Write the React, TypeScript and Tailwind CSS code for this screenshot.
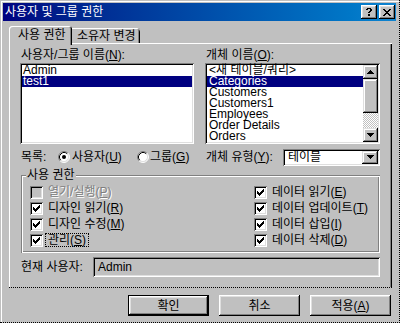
import React from "react";

const FONT = "font-['Liberation_Sans','Noto_Sans_CJK_KR',sans-serif]";

const RAISED =
  "shadow-[inset_-1px_-1px_0_#000,inset_1px_1px_0_#fff,inset_-2px_-2px_0_#808080,inset_2px_2px_0_#dfdfdf]";
const RAISED_SB =
  "shadow-[inset_-1px_-1px_0_#000,inset_1px_1px_0_#dfdfdf,inset_-2px_-2px_0_#808080,inset_2px_2px_0_#fff]";
const SUNKEN =
  "shadow-[inset_1px_1px_0_#808080,inset_-1px_-1px_0_#fff,inset_2px_2px_0_#000,inset_-2px_-2px_0_#dfdfdf]";
const ETCHED =
  "shadow-[inset_1px_1px_0_#808080,inset_-1px_-1px_0_#fff,inset_2px_2px_0_#fff,inset_-2px_-2px_0_#808080]";

const CHECK = ["......#", ".....##", "#...###", "##.###.", "#####..", ".###...", "..#...."];
const CLOSE = ["##....##", ".##..##.", "..####..", "...##...", "..####..", ".##..##.", "##....##"];
const HELP = [".####.", "##..##", "....##", "...##.", "..##..", "......", "..##..", "..##.."];
const UP = ["...#...", "..###..", ".#####.", "#######"];
const DOWN = ["#######", ".#####.", "..###..", "...#..."];

function Pixels({ rows, color = "#000" }: { rows: string[]; color?: string }) {
  const w = rows[0].length;
  const h = rows.length;
  return (
    <svg width={w} height={h} viewBox={`0 0 ${w} ${h}`} shapeRendering="crispEdges">
      {rows.flatMap((row, y) =>
        row
          .split("")
          .map((c, x) =>
            c === "#" ? <rect key={`${x}-${y}`} x={x} y={y} width={1} height={1} fill={color} /> : null
          )
      )}
    </svg>
  );
}

function U({ children }: { children: React.ReactNode }) {
  return <span className="underline underline-offset-1">{children}</span>;
}

function CheckBox({ checked, disabled }: { checked?: boolean; disabled?: boolean }) {
  return (
    <div
      className={`flex h-[13px] w-[13px] shrink-0 items-center justify-center ${SUNKEN} ${
        disabled ? "bg-[#c0c0c0]" : "bg-white"
      }`}
    >
      {checked && <Pixels rows={CHECK} />}
    </div>
  );
}

function Radio({ checked }: { checked?: boolean }) {
  return (
    <svg width="12" height="12" viewBox="0 0 12 12" className="shrink-0">
      <circle cx="6" cy="6" r="5" fill="#fff" />
      <path d="M2.11 9.89A5.5 5.5 0 0 1 9.89 2.11" fill="none" stroke="#808080" />
      <path d="M9.89 2.11A5.5 5.5 0 0 1 2.11 9.89" fill="none" stroke="#fff" />
      <path d="M2.82 9.18A4.5 4.5 0 0 1 9.18 2.82" fill="none" stroke="#000" />
      <path d="M9.18 2.82A4.5 4.5 0 0 1 2.82 9.18" fill="none" stroke="#dfdfdf" />
      {checked && <circle cx="6" cy="6" r="2" fill="#000" />}
    </svg>
  );
}

type Perm = { label: string; key: string; checked: boolean; disabled?: boolean; focus?: boolean };

const leftPerms: Perm[] = [
  { label: "열기/실행", key: "P", checked: false, disabled: true },
  { label: "디자인 읽기", key: "R", checked: true },
  { label: "디자인 수정", key: "M", checked: true },
  { label: "관리", key: "S", checked: true, focus: true },
];

const rightPerms: Perm[] = [
  { label: "데이터 읽기", key: "E", checked: true },
  { label: "데이터 업데이트", key: "T", checked: true },
  { label: "데이터 삽입", key: "I", checked: true },
  { label: "데이터 삭제", key: "D", checked: true },
];

function PermRow({ p }: { p: Perm }) {
  return (
    <div className="flex h-[16px] items-center">
      <CheckBox checked={p.checked} disabled={p.disabled} />
      <span
        className={`ml-[2px] whitespace-nowrap border px-[2px] leading-[12px] ${
          p.focus ? "border-dotted border-black" : "border-transparent"
        } ${p.disabled ? "text-[#808080] [text-shadow:1px_1px_0_#fff]" : ""}`}
      >
        {p.label}(<U>{p.key}</U>)
      </span>
    </div>
  );
}

const objects = ["<새 테이블/쿼리>", "Categories", "Customers", "Customers1", "Employees", "Order Details", "Orders"];

export default function App() {
  return (
    <div
      className={`h-[323px] w-[400px] overflow-hidden border-r border-b border-dotted border-black bg-[#c0c0c0] text-[12px] text-black ${FONT}`}
    >
      <div className="ml-px mt-px h-[321px] border-l border-t border-white p-px">
        {/* title bar */}
        <div className="flex h-[18px] w-[393px] items-center justify-between bg-linear-to-r from-[#000080] to-[#1084d0] pl-[2px] pr-px">
          <span className="leading-[14px] text-white">사용자 및 그룹 권한</span>
          <div className="flex gap-[2px]">
            <div className={`flex h-[14px] w-[16px] items-center justify-center bg-[#c0c0c0] ${RAISED}`}>
              <Pixels rows={HELP} />
            </div>
            <div className={`flex h-[14px] w-[16px] items-center justify-center bg-[#c0c0c0] ${RAISED}`}>
              <Pixels rows={CLOSE} />
            </div>
          </div>
        </div>

        {/* tabs */}
        <div className="ml-[6px] mt-[5px] flex h-[17px] items-end">
          <div className="relative z-10 -mb-[2px] h-[19px] w-[63px] rounded-t-[3px] bg-[#c0c0c0] pl-[9px] pt-[2px] leading-[14px] shadow-[inset_1px_1px_0_#fff,inset_-1px_0_0_#000,inset_-2px_0_0_#808080]">
            사용 권한
          </div>
          <div className="h-[15px] w-[68px] rounded-tr-[3px] pl-[5px] pt-px leading-[14px] shadow-[inset_0_1px_0_#fff,inset_-1px_0_0_#000,inset_-2px_0_0_#808080]">
            소유자 변경
          </div>
        </div>

        {/* panel */}
        <div className="ml-[6px] h-[245px] w-[383px] border-b border-dotted border-black pl-[11px] pr-[12px] pt-[5px] shadow-[inset_1px_1px_0_#fff,inset_-1px_0_0_#000,inset_-2px_0_0_#808080]">
          <div className="grid grid-cols-[174px_175px] gap-x-[11px]">
            <div>
              <div className="h-[14px] pl-px leading-[14px]">
                사용자/그룹 이름(<U>N</U>):
              </div>
              <div className={`mt-px h-[81px] bg-white p-[2px] ${SUNKEN}`}>
                <div className="h-[11px] pl-px leading-[11px]">Admin</div>
                <div className="h-[11px] bg-[#000080] pl-px leading-[11px] text-white">test1</div>
              </div>
            </div>
            <div>
              <div className="h-[14px] pl-px leading-[14px]">
                개체 이름(<U>O</U>):
              </div>
              <div className={`mt-px flex h-[81px] bg-white p-[2px] ${SUNKEN}`}>
                <div className="flex-1">
                  {objects.map((o, i) => (
                    <div
                      key={o}
                      className={`h-[11px] whitespace-nowrap pl-[2px] leading-[11px] ${
                        i === 1 ? "bg-[#000080] text-white" : ""
                      }`}
                    >
                      {o}
                    </div>
                  ))}
                </div>
                <div className="flex w-[15px] flex-col">
                  <div className={`flex h-[14px] items-center justify-center bg-[#c0c0c0] ${RAISED_SB}`}>
                    <Pixels rows={UP} />
                  </div>
                  <div className={`h-[34px] bg-[#c0c0c0] ${RAISED_SB}`} />
                  <div className="flex-1 bg-[repeating-conic-gradient(#fff_0_25%,#c0c0c0_0_50%)] bg-[length:2px_2px]" />
                  <div className={`flex h-[14px] items-center justify-center bg-[#c0c0c0] ${RAISED_SB}`}>
                    <Pixels rows={DOWN} />
                  </div>
                </div>
              </div>
            </div>
          </div>

          {/* list type / object type */}
          <div className="mt-[4px] grid h-[17px] grid-cols-[174px_175px] gap-x-[11px]">
            <div className="flex items-center">
              <span className="w-[38px] pl-px">목록:</span>
              <Radio checked />
              <span className="ml-[2px] w-[65px] whitespace-nowrap">
                사용자(<U>U</U>)
              </span>
              <Radio />
              <span className="ml-px whitespace-nowrap">
                그룹(<U>G</U>)
              </span>
            </div>
            <div className="flex items-center">
              <span className="w-[78px] whitespace-nowrap pl-px">
                개체 유형(<U>Y</U>):
              </span>
              <div className={`flex h-[17px] w-[97px] items-center bg-white p-[2px] ${SUNKEN}`}>
                <span className="flex-1 pl-[3px] leading-[13px]">테이블</span>
                <div className={`flex h-full w-[16px] items-center justify-center bg-[#c0c0c0] ${RAISED_SB}`}>
                  <Pixels rows={DOWN} />
                </div>
              </div>
            </div>
          </div>

          {/* permissions group */}
          <div className={`relative ml-px mt-[10px] h-[78px] w-[359px] ${ETCHED}`}>
            <span className="absolute -top-[7px] left-[5px] bg-[#c0c0c0] px-px leading-[14px]">사용 권한</span>
            <div className="grid grid-cols-[224px_1fr] pl-[9px] pt-[9px]">
              <div>
                {leftPerms.map((p) => (
                  <PermRow key={p.key} p={p} />
                ))}
              </div>
              <div>
                {rightPerms.map((p) => (
                  <PermRow key={p.key} p={p} />
                ))}
              </div>
            </div>
          </div>

          {/* current user */}
          <div className="mt-[4px] flex h-[20px] items-center">
            <span className="w-[73px] whitespace-nowrap pl-px">현재 사용자:</span>
            <div className={`flex h-[20px] w-[287px] items-center p-[2px] pl-[5px] ${SUNKEN}`}>Admin</div>
          </div>
        </div>

        {/* buttons */}
        <div className="mt-[7px] flex justify-end gap-[10px] pr-[7px]">
          <div className="h-[21px] w-[81px] border border-black">
            <div className={`flex h-full w-full items-center justify-center ${RAISED}`}>확인</div>
          </div>
          <div className={`flex h-[21px] w-[81px] items-center justify-center ${RAISED}`}>취소</div>
          <div className={`flex h-[21px] w-[81px] items-center justify-center ${RAISED}`}>
            적용(<U>A</U>)
          </div>
        </div>
      </div>
    </div>
  );
}
